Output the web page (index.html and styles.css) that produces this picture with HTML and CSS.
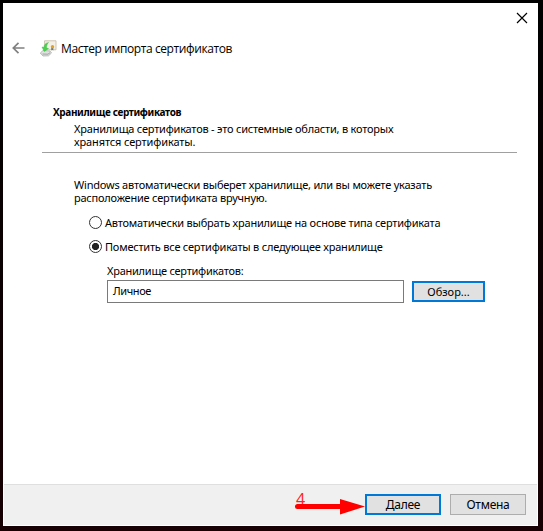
FILE: index.html
```html
<!DOCTYPE html>
<html lang="ru">
<head>
<meta charset="utf-8">
<title>Мастер импорта сертификатов</title>
<link rel="stylesheet" href="styles.css">
</head>
<body>
<div class="window">
  <div class="titlebar">
    <svg class="close" width="12" height="12" viewBox="0 0 12 12"><path d="M1 1l10 10M11 1L1 11" stroke="#000" stroke-width="1.15"/></svg>
  </div>
  <header class="header">
    <svg class="back" width="13" height="12" viewBox="0 0 13 12"><path d="M6.500 .8L1.300 6l5.200 5.200M1.300 6H12.500" fill="none" stroke="#808080" stroke-width="1.7"/></svg>
    <svg class="cert" width="17" height="17" viewBox="0 0 17 17">
      <path d="M4.500 .8h11.500v9H5z" fill="#f5f0e7" stroke="#c9bda9" stroke-width=".9"/>
      <path d="M11.300 7.500v3l1-.8 1 .8v-3z" fill="#3975bd"/>
      <circle cx="12.500" cy="6.800" r="1.700" fill="#e5a01c"/>
      <path d="M.3 13l2.700-2.500 7 .5 1.500 2-3 2.800-5.500.2z" fill="#dfe1e1" stroke="#a0a5a4" stroke-width=".7"/>
      <path d="M2.500 14l5.500.2 2-1.500" fill="none" stroke="#8a908e" stroke-width=".8"/>
      <path d="M8.500 2.500C5.300 3 4 5 4 7.300L2 7 4.200 11.500 8.500 8.500l-2-.4C6.400 5.800 7 4 8.500 2.500z" fill="#48d34c" stroke="#35b043" stroke-width=".4"/>
    </svg>
    <h1 class="title">Мастер импорта сертификатов</h1>
  </header>
  <section class="intro">
    <h2>Хранилище сертификатов</h2>
    <p><span class="line">Хранилища сертификатов - это системные области, в которых</span><span class="line loose">хранятся сертификаты.</span></p>
  </section>
  <main class="content">
    <p><span class="line">Windows автоматически выберет хранилище, или вы можете указать</span><span class="line">расположение сертификата вручную.</span></p>
    <div class="option"><span class="radio"></span><span>Автоматически выбрать хранилище на основе типа сертификата</span></div>
    <div class="option"><span class="radio checked"></span><span>Поместить все сертификаты в следующее хранилище</span></div>
    <div class="field-label">Хранилище сертификатов:</div>
    <div class="field"><div class="input">Личное</div><div class="button browse primary">Обзор...</div></div>
  </main>
  <footer class="footer">
    <div class="button primary">Далее</div>
    <div class="button">Отмена</div>
    <div class="step">4</div>
    <svg class="arrow" width="71" height="16" viewBox="0 0 71 16"><path d="M3.500 7.500H47" stroke="red" stroke-width="5" stroke-linecap="round"/><path d="M46 0l25 7.500L46 15.500z" fill="red"/></svg>
  </footer>
</div>
</body>
</html>
```
FILE: styles.css
```css
* { box-sizing: border-box; }
body { margin: 0; padding: 3px; width: 543px; height: 531px; overflow: hidden; background: linear-gradient(#000, #090002 40%, #180003); font: 11px/13px "Noto Sans", sans-serif; letter-spacing: -.215px; color: #000; }
h1, h2, p { margin: 0; white-space: nowrap; }
svg { display: block; flex: none; }
.line { display: block; height: 13px; }
.loose { letter-spacing: -.12px; }
.window { width: 535px; height: 523px; background: #fff; display: flex; flex-direction: column; }
.titlebar { height: 35px; display: flex; justify-content: flex-end; padding: 9px 10px 0 0; }
.header { height: 20px; display: flex; align-items: center; padding-left: 9px; }
.cert { margin-left: 15px; }
.title { font: 12px/20px "Open Sans", sans-serif; letter-spacing: -.4px; margin-left: 4px; padding-top: 2px; }
.intro { margin: 45px 0 0 39px; width: 475px; height: 50px; border-bottom: 1px solid #a0a0a0; }
.intro h2 { font-size: 10px; line-height: 13px; letter-spacing: -.36px; padding: 3px 0 0 11px; }
.intro p { padding: 3px 0 0 32px; }
.content { padding: 25px 0 0 71px; }
.option { display: flex; align-items: center; height: 14px; margin: 11px 0 0 15px; white-space: nowrap; }
.option + .option { margin-top: 10px; }
.radio { width: 13px; height: 13px; border: 1px solid #333; border-radius: 50%; margin-right: 3px; flex: none; }
.checked { background: radial-gradient(circle, #222 0 3.300px, transparent 3.900px); }
.field-label { margin: 11px 0 0 33px; height: 13px; letter-spacing: -.25px; white-space: nowrap; }
.field { display: flex; align-items: center; margin: 3px 0 0 33px; gap: 8px; }
.input { width: 297px; height: 23px; border: 1px solid #7a7a7a; padding: 3px 5px; letter-spacing: -.4px; }
.button { height: 21px; border: 1px solid #adadad; background: #e1e1e1; display: flex; align-items: center; justify-content: center; }
.primary { border: 2px solid #0078d7; }
.browse { width: 73px; letter-spacing: 0; }
.footer { position: relative; margin: auto 1px 1px; height: 41px; border-top: 1px solid #dfdfdf; background: #f0f0f0; display: flex; justify-content: flex-end; gap: 9px; padding: 9px 11px 0 0; font-size: 12px; letter-spacing: -.25px; }
.footer .button { width: 76px; }
.step { position: absolute; left: 292px; top: 4px; color: #ff2020; font: 16px/20px "Open Sans", sans-serif; letter-spacing: 0; }
.arrow { position: absolute; left: 290px; top: 14px; }
```
